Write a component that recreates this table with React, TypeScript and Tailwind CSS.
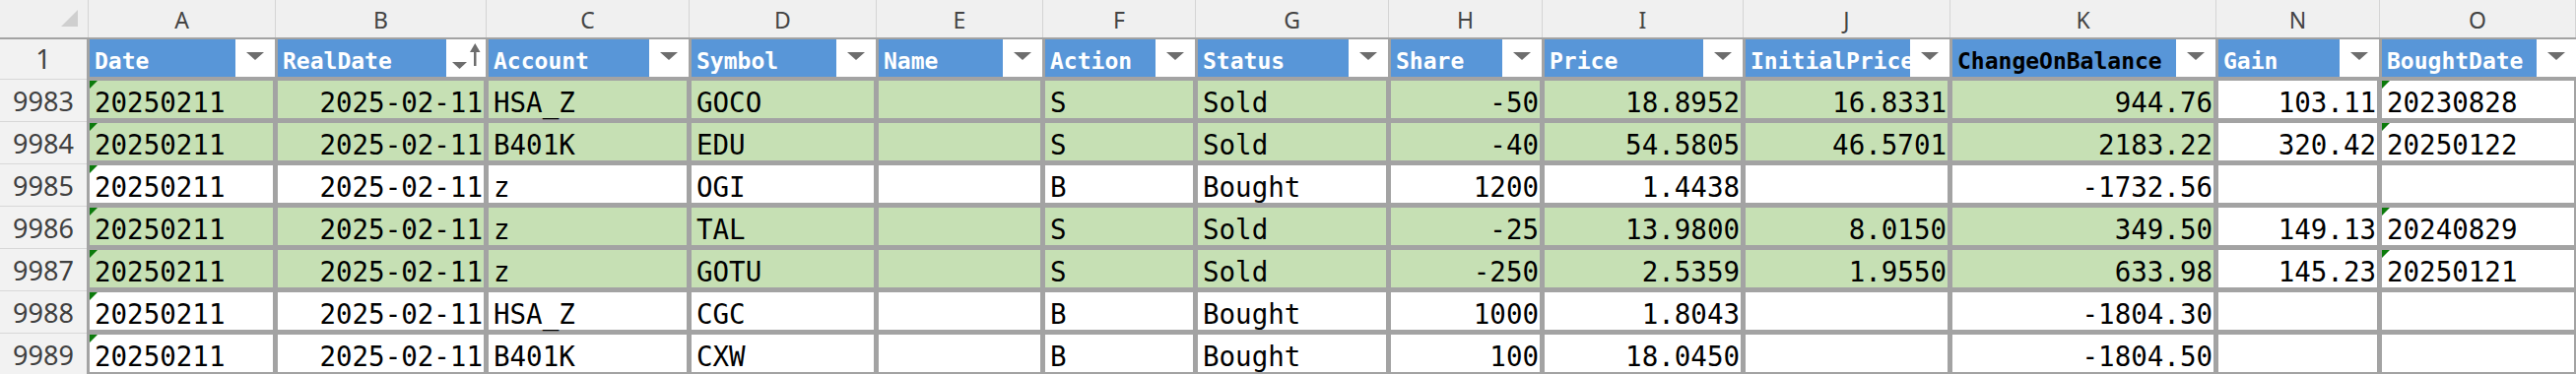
import React from "react";

type Col = {
  letter: string;
  head: string;
  wd: string;
  wh: string;
  wl: string;
  align: "left" | "right";
  sort?: boolean;
  dark?: boolean;
};

const cols: Col[] = [
  { letter: "A", head: "Date", wd: "w-[186px]", wh: "w-[188px]", wl: "w-[190px]", align: "left" },
  { letter: "B", head: "RealDate", wd: "w-[209px]", wh: "w-[211px]", wl: "w-[214px]", align: "right", sort: true },
  { letter: "C", head: "Account", wd: "w-[201px]", wh: "w-[203px]", wl: "w-[206px]", align: "left" },
  { letter: "D", head: "Symbol", wd: "w-[185px]", wh: "w-[187px]", wl: "w-[190px]", align: "left" },
  { letter: "E", head: "Name", wd: "w-[164px]", wh: "w-[166px]", wl: "w-[169px]", align: "left" },
  { letter: "F", head: "Action", wd: "w-[150px]", wh: "w-[152px]", wl: "w-[155px]", align: "left" },
  { letter: "G", head: "Status", wd: "w-[191px]", wh: "w-[193px]", wl: "w-[196px]", align: "left" },
  { letter: "H", head: "Share", wd: "w-[151px]", wh: "w-[153px]", wl: "w-[156px]", align: "right" },
  { letter: "I", head: "Price", wd: "w-[199px]", wh: "w-[201px]", wl: "w-[204px]", align: "right" },
  { letter: "J", head: "InitialPrice", wd: "w-[205px]", wh: "w-[207px]", wl: "w-[210px]", align: "right" },
  { letter: "K", head: "ChangeOnBalance", wd: "w-[265px]", wh: "w-[267px]", wl: "w-[270px]", align: "right", dark: true },
  { letter: "N", head: "Gain", wd: "w-[161px]", wh: "w-[163px]", wl: "w-[166px]", align: "right" },
  { letter: "O", head: "BoughtDate", wd: "w-[195px]", wh: "w-[197px]", wl: "w-[199px]", align: "left" },
];

type Row = { n: string; green: boolean; v: string[] };

const rows: Row[] = [
  { n: "9983", green: true, v: ["20250211", "2025-02-11", "HSA_Z", "GOCO", "", "S", "Sold", "-50", "18.8952", "16.8331", "944.76", "103.11", "20230828"] },
  { n: "9984", green: true, v: ["20250211", "2025-02-11", "B401K", "EDU", "", "S", "Sold", "-40", "54.5805", "46.5701", "2183.22", "320.42", "20250122"] },
  { n: "9985", green: false, v: ["20250211", "2025-02-11", "z", "OGI", "", "B", "Bought", "1200", "1.4438", "", "-1732.56", "", ""] },
  { n: "9986", green: true, v: ["20250211", "2025-02-11", "z", "TAL", "", "S", "Sold", "-25", "13.9800", "8.0150", "349.50", "149.13", "20240829"] },
  { n: "9987", green: true, v: ["20250211", "2025-02-11", "z", "GOTU", "", "S", "Sold", "-250", "2.5359", "1.9550", "633.98", "145.23", "20250121"] },
  { n: "9988", green: false, v: ["20250211", "2025-02-11", "HSA_Z", "CGC", "", "B", "Bought", "1000", "1.8043", "", "-1804.30", "", ""] },
  { n: "9989", green: false, v: ["20250211", "2025-02-11", "B401K", "CXW", "", "B", "Bought", "100", "18.0450", "", "-1804.50", "", ""] },
];

function Dropdown({ sort }: { sort?: boolean }) {
  return (
    <div className="w-[40px] h-full bg-white shrink-0 relative flex justify-center">
      {sort ? (
        <svg width="40" height="38" viewBox="0 0 40 38" className="block">
          <polygon points="6,23 21,23 13.5,30" fill="#6d6d6d" />
          <rect x="28" y="8" width="2.5" height="19" fill="#6d6d6d" />
          <polygon points="24,13 29.25,4 34.5,13" fill="#6d6d6d" />
        </svg>
      ) : (
        <svg width="18" height="8" viewBox="0 0 18 8" className="block mt-[13px]">
          <polygon points="0,0 18,0 9,8" fill="#6d6d6d" />
        </svg>
      )}
    </div>
  );
}

function Flag() {
  return (
    <svg width="8" height="8" viewBox="0 0 8 8" className="absolute top-0 left-0">
      <polygon points="0,0 8,0 0,8" fill="#0b7a0b" />
    </svg>
  );
}

export default function App() {
  return (
    <div className="w-[2615px] h-[380px] overflow-hidden bg-[#a3a3a3] flex flex-col">
      {/* column letters */}
      <div className="h-[38px] flex bg-[#f0f0f0] shrink-0 font-['Noto_Sans',sans-serif] text-[#444]">
        <div className="w-[90px] h-full border-r border-[#d4d4d4] relative shrink-0">
          <svg width="17" height="17" viewBox="0 0 17 17" className="absolute left-[62px] top-[10px]">
            <polygon points="17,0 17,17 0,17" fill="#cfcfcf" />
          </svg>
        </div>
        {cols.map((c) => (
          <div
            key={c.letter}
            className={`${c.wl} h-full border-r border-[#d4d4d4] shrink-0 flex justify-center pt-[9px] text-[23px] leading-none`}
          >
            {c.letter}
          </div>
        ))}
      </div>
      <div className="h-[2px] shrink-0" />
      <div className="flex flex-1 min-h-0">
        {/* row numbers */}
        <div className="w-[88px] bg-[#f2f2f2] flex flex-col shrink-0 font-['Noto_Sans',sans-serif] text-[#404040] text-[27px] leading-none">
          <div className="h-[40px] flex justify-center pt-[6px] shrink-0">1</div>
          {rows.map((r) => (
            <div key={r.n} className="h-[43px] border-t border-[#d8d8d8] flex justify-center pt-[8px] shrink-0">
              {r.n}
            </div>
          ))}
        </div>
        <div className="ml-[3px] flex flex-col font-['DejaVu_Sans_Mono',monospace]">
          {/* table header */}
          <div className="h-[38px] flex gap-[3px] shrink-0 mb-[4px]">
            {cols.map((c) => (
              <div key={c.letter} className={`${c.wh} h-full bg-[#5896d8] flex shrink-0`}>
                <div className="flex-1 min-w-0 overflow-hidden flex items-end pb-[4px] pl-[5px]">
                  <span
                    className={`font-bold text-[23px] leading-none whitespace-nowrap ${c.dark ? "text-black" : "text-white"}`}
                  >
                    {c.head}
                  </span>
                </div>
                <Dropdown sort={c.sort} />
              </div>
            ))}
          </div>
          {/* data */}
          <div className="flex flex-col gap-[5px]">
            {rows.map((r) => (
              <div key={r.n} className="h-[38px] flex gap-[5px] shrink-0">
                {cols.map((c, i) => {
                  const val = r.v[i];
                  const green = r.green && i <= 10;
                  const flag = i === 0 || (i === 12 && val !== "");
                  return (
                    <div
                      key={c.letter}
                      className={`${c.wd} h-full shrink-0 relative flex items-end pb-[2px] ${
                        green ? "bg-[#c6e0b4]" : "bg-white"
                      } ${c.align === "right" ? "justify-end pr-[1px]" : "justify-start pl-[5px]"}`}
                    >
                      {flag && <Flag />}
                      <span className="text-[27.5px] leading-none text-black whitespace-nowrap">{val}</span>
                    </div>
                  );
                })}
              </div>
            ))}
          </div>
        </div>
      </div>
    </div>
  );
}
